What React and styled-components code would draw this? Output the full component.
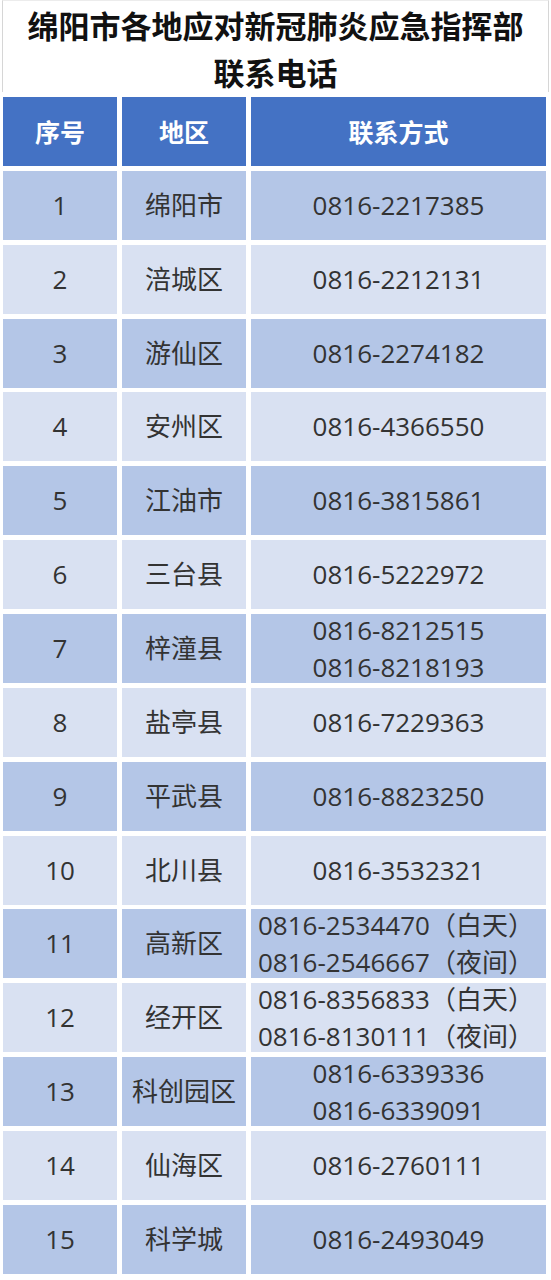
import React from "react";
import styled, { createGlobalStyle } from "styled-components";

const Global = createGlobalStyle`
  html, body { margin: 0; padding: 0; background: #ffffff; }
  body { font-family: "Open Sans", "Noto Sans CJK SC", sans-serif; }
`;

const Page = styled.div`
  width: 551px;
  background: #ffffff;
  padding-bottom: 6px;
`;

const TitleBox = styled.div`
  margin: 0 2px 0 2px;
  height: 92px;
  border-left: 1px solid #d6d6d6;
  border-right: 1px solid #d6d6d6;
  border-top: 1px solid #ececec;
  box-sizing: border-box;
  display: flex;
  flex-direction: column;
  align-items: center;
  font-family: "Noto Sans CJK SC", sans-serif;
  font-weight: 700;
  font-size: 31px;
  line-height: 47px;
  color: #111;
`;

const Table = styled.div`
  margin: 5px 0 0 3px;
  display: grid;
  grid-template-columns: 114px 124px 295px;
  column-gap: 5px;
  row-gap: 4.86px;
  grid-auto-rows: 69px;
`;

const Cell = styled.div`
  background: ${(p) => (p.$head ? "#4472c4" : p.$odd ? "#b4c6e7" : "#d9e1f2")};
  color: ${(p) => (p.$head ? "#ffffff" : "#333333")};
  font-weight: ${(p) => (p.$head ? 700 : 400)};
  font-family: ${(p) =>
    p.$head ? '"Noto Sans CJK SC", sans-serif' : '"Open Sans", "Noto Sans CJK SC", sans-serif'};
  font-size: ${(p) => (p.$head ? "25px" : "26px")};
  display: flex;
  flex-direction: column;
  justify-content: center;
  align-items: ${(p) => (p.$left ? "flex-start" : "center")};
  padding-left: ${(p) => (p.$left ? "7px" : "0")};
  line-height: 37px;
  white-space: nowrap;
  overflow: visible;
`;

const Line = styled.span`
  display: block;
`;

const rows = [
  ["1", "绵阳市", ["0816-2217385"]],
  ["2", "涪城区", ["0816-2212131"]],
  ["3", "游仙区", ["0816-2274182"]],
  ["4", "安州区", ["0816-4366550"]],
  ["5", "江油市", ["0816-3815861"]],
  ["6", "三台县", ["0816-5222972"]],
  ["7", "梓潼县", ["0816-8212515", "0816-8218193"]],
  ["8", "盐亭县", ["0816-7229363"]],
  ["9", "平武县", ["0816-8823250"]],
  ["10", "北川县", ["0816-3532321"]],
  ["11", "高新区", ["0816-2534470（白天）", "0816-2546667（夜间）"], true],
  ["12", "经开区", ["0816-8356833（白天）", "0816-8130111（夜间）"], true],
  ["13", "科创园区", ["0816-6339336", "0816-6339091"]],
  ["14", "仙海区", ["0816-2760111"]],
  ["15", "科学城", ["0816-2493049"]],
];

export default function App() {
  return (
    <Page>
      <Global />
      <TitleBox>
        <span>绵阳市各地应对新冠肺炎应急指挥部</span>
        <span>联系电话</span>
      </TitleBox>
      <Table>
        <Cell $head>序号</Cell>
        <Cell $head>地区</Cell>
        <Cell $head>联系方式</Cell>
        {rows.map(([n, area, phones, left], i) => {
          const odd = i % 2 === 0;
          return (
            <React.Fragment key={n}>
              <Cell $odd={odd}>{n}</Cell>
              <Cell $odd={odd}>{area}</Cell>
              <Cell $odd={odd} $left={left}>
                {phones.map((p) => (
                  <Line key={p}>{p}</Line>
                ))}
              </Cell>
            </React.Fragment>
          );
        })}
      </Table>
    </Page>
  );
}
